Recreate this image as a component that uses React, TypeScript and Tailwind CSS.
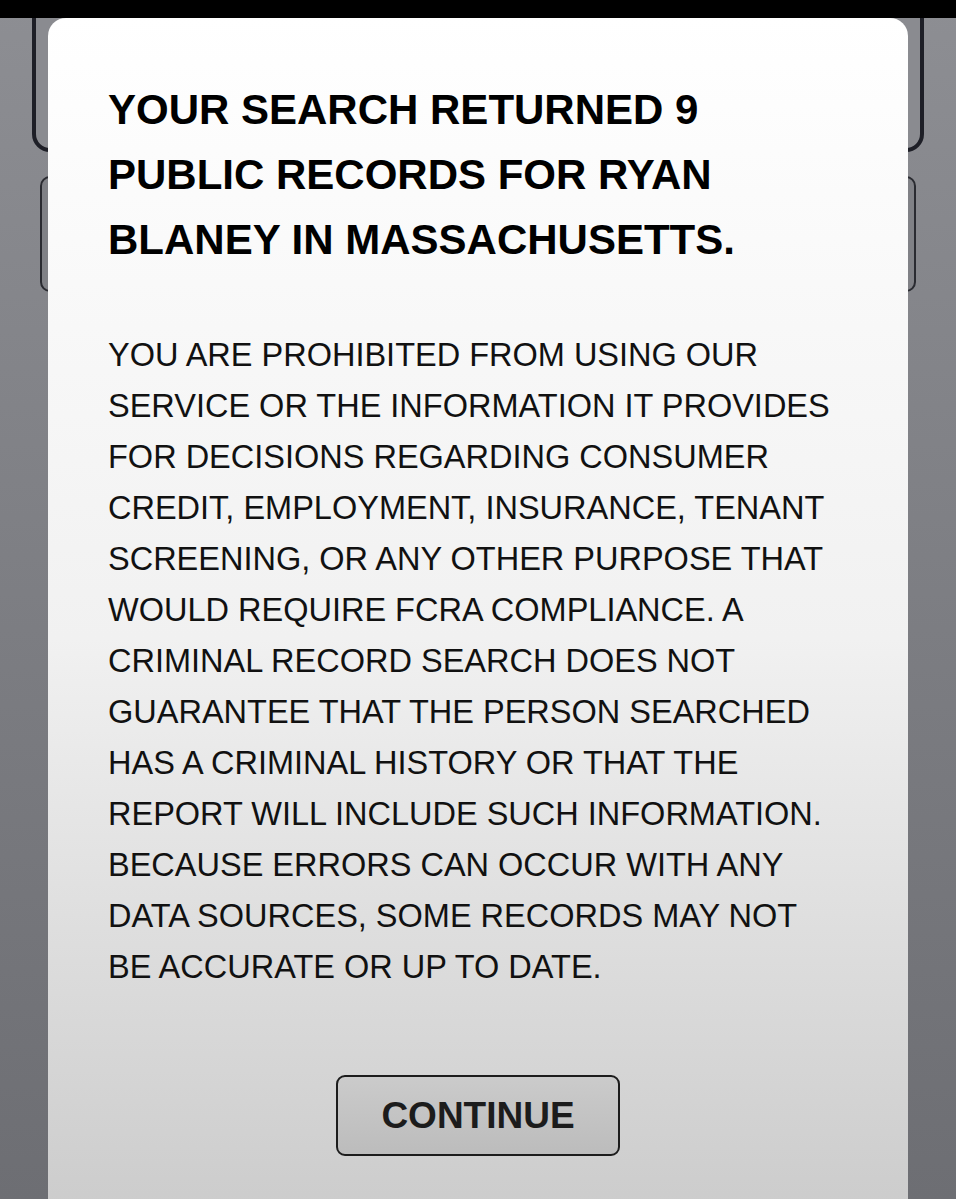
export default function App() {
  return (
    <div className="relative h-[1199px] w-[956px] overflow-hidden bg-gradient-to-b from-[#8d8e93] to-[#6d6e73] font-['Liberation_Sans',Arial,sans-serif]">
      {/* status bar strip */}
      <div className="relative z-10 h-[18px] bg-black" />

      {/* page behind the sheet */}
      <div className="px-[32px]">
        <div className="-mt-[20px] h-[154px] rounded-b-[18px] border-[4px] border-[#1e1f27] bg-[#8a8b90]" />
        <div className="mx-[8px] mt-[24px] h-[116px] rounded-[10px] border-2 border-[#2a2b31] bg-[#808186]" />
      </div>

      {/* modal sheet */}
      <div className="absolute left-[48px] top-[18px] z-20 h-[1240px] w-[860px] rounded-t-[18px] bg-gradient-to-b from-white via-[#f1f1f1] to-[#c9c9c9] px-[60px] pt-[59px]">
        <h1 className="text-[42px] font-bold uppercase leading-[65px] text-black">
          Your search returned 9<br />
          public records for Ryan<br />
          Blaney in Massachusetts.
        </h1>
        <p className="mt-[58px] w-[730px] text-[32.5px] leading-[51px] text-[#111]">
          YOU ARE PROHIBITED FROM USING OUR SERVICE OR THE INFORMATION IT PROVIDES FOR DECISIONS
          REGARDING CONSUMER CREDIT, EMPLOYMENT, INSURANCE, TENANT SCREENING, OR ANY OTHER PURPOSE
          THAT WOULD REQUIRE FCRA COMPLIANCE. A CRIMINAL RECORD SEARCH DOES NOT GUARANTEE THAT THE
          PERSON SEARCHED HAS A CRIMINAL HISTORY OR THAT THE REPORT WILL INCLUDE SUCH INFORMATION.
          BECAUSE ERRORS CAN OCCUR WITH ANY DATA SOURCES, SOME RECORDS MAY NOT BE ACCURATE OR UP TO
          DATE.
        </p>
        <div className="mt-[82px] flex justify-center">
          <button className="flex h-[81px] w-[284px] items-center justify-center rounded-[9px] border-2 border-[#1c1c1c] bg-gradient-to-b from-[#cbcbcb] to-[#bcbcbc] text-[37px] font-bold text-[#1c1c1c]">
            CONTINUE
          </button>
        </div>
      </div>
    </div>
  );
}
